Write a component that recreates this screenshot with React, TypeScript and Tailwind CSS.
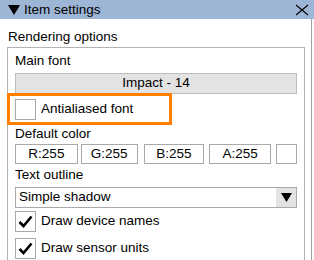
const font = { fontFamily: '"Liberation Sans", Arial, sans-serif' };

const CheckBox = ({ checked }: { checked: boolean }) => (
  <div className="w-[21px] h-[21px] border border-[#a9a9a9] bg-white flex items-center justify-center shrink-0">
    {checked && (
      <svg width="17" height="17" viewBox="0 0 17 17">
        <path d="M2.5 9 L6.5 13 L14.5 3.5" fill="none" stroke="#000" strokeWidth="2.6" />
      </svg>
    )}
  </div>
);

const ColorBox = ({ label, cls }: { label: string; cls: string }) => (
  <div className={`${cls} h-[20px] border border-[#a9a9a9] bg-white flex items-center justify-center`}>
    {label}
  </div>
);

export default function App() {
  return (
    <div className="relative w-[314px] h-[260px] overflow-hidden bg-white text-[13.5px] text-black" style={font}>
      <div className="h-[19px] bg-[#9db6d5] flex items-center justify-between pl-[8px] pr-[5px]">
        <div className="flex items-center gap-[4px]">
          <svg width="12" height="11" viewBox="0 0 12 11">
            <polygon points="0,1 12,1 6,11" fill="#000" />
          </svg>
          <span className="leading-none">Item settings</span>
        </div>
        <svg width="14" height="12" viewBox="0 0 14 12">
          <path d="M1 1 L13 11 M13 1 L1 11" stroke="#000" strokeWidth="1.1" fill="none" />
        </svg>
      </div>

      <div className="w-[312px] h-[241px] border-r border-[#a0a0a0] pl-[7px]">
        <div className="h-[28px] pt-[8px] pl-[1px] leading-[20px]">Rendering options</div>
        <div className="w-[298px] border border-[#b4b4b4] border-b-0 pl-[7px] pr-[7px]">
          <div className="h-[25px] flex items-center pt-[1px]">Main font</div>
          <div className="h-[21px] w-[282px] bg-[#e3e3e3] border border-[#bdbdbd] flex items-center justify-center">
            Impact - 14
          </div>
          <div className="h-[31px] flex items-center gap-[5px]">
            <CheckBox checked={false} />
            <span>Antialiased font</span>
          </div>
          <div className="h-[18px] flex items-center">Default color</div>
          <div className="mt-[1px] flex">
            <ColorBox label="R:255" cls="w-[63px]" />
            <ColorBox label="G:255" cls="w-[57px] ml-[3px]" />
            <ColorBox label="B:255" cls="w-[61px] ml-[6px]" />
            <ColorBox label="A:255" cls="w-[62px] ml-[5px]" />
            <ColorBox label="" cls="w-[21px] ml-[5px]" />
          </div>
          <div className="h-[23px] flex items-center">Text outline</div>
          <div className="h-[21px] w-[282px] border border-[#a9a9a9] bg-white flex items-stretch">
            <div className="flex-1 flex items-center pl-[3px]">Simple shadow</div>
            <div className="w-[20px] bg-[#e3e3e3] flex items-center justify-center">
              <svg width="11" height="9" viewBox="0 0 11 9">
                <polygon points="0,0 11,0 5.5,9" fill="#000" />
              </svg>
            </div>
          </div>
          <div className="h-[26px] flex items-center gap-[5px] pt-[1px]">
            <CheckBox checked />
            <span>Draw device names</span>
          </div>
          <div className="h-[27px] flex items-center gap-[5px] pt-[1px]">
            <CheckBox checked />
            <span>Draw sensor units</span>
          </div>
        </div>
      </div>

      <div className="absolute left-[7px] top-[93px] w-[165px] h-[32px] border-[3px] border-[#ff8000]" />
    </div>
  );
}
